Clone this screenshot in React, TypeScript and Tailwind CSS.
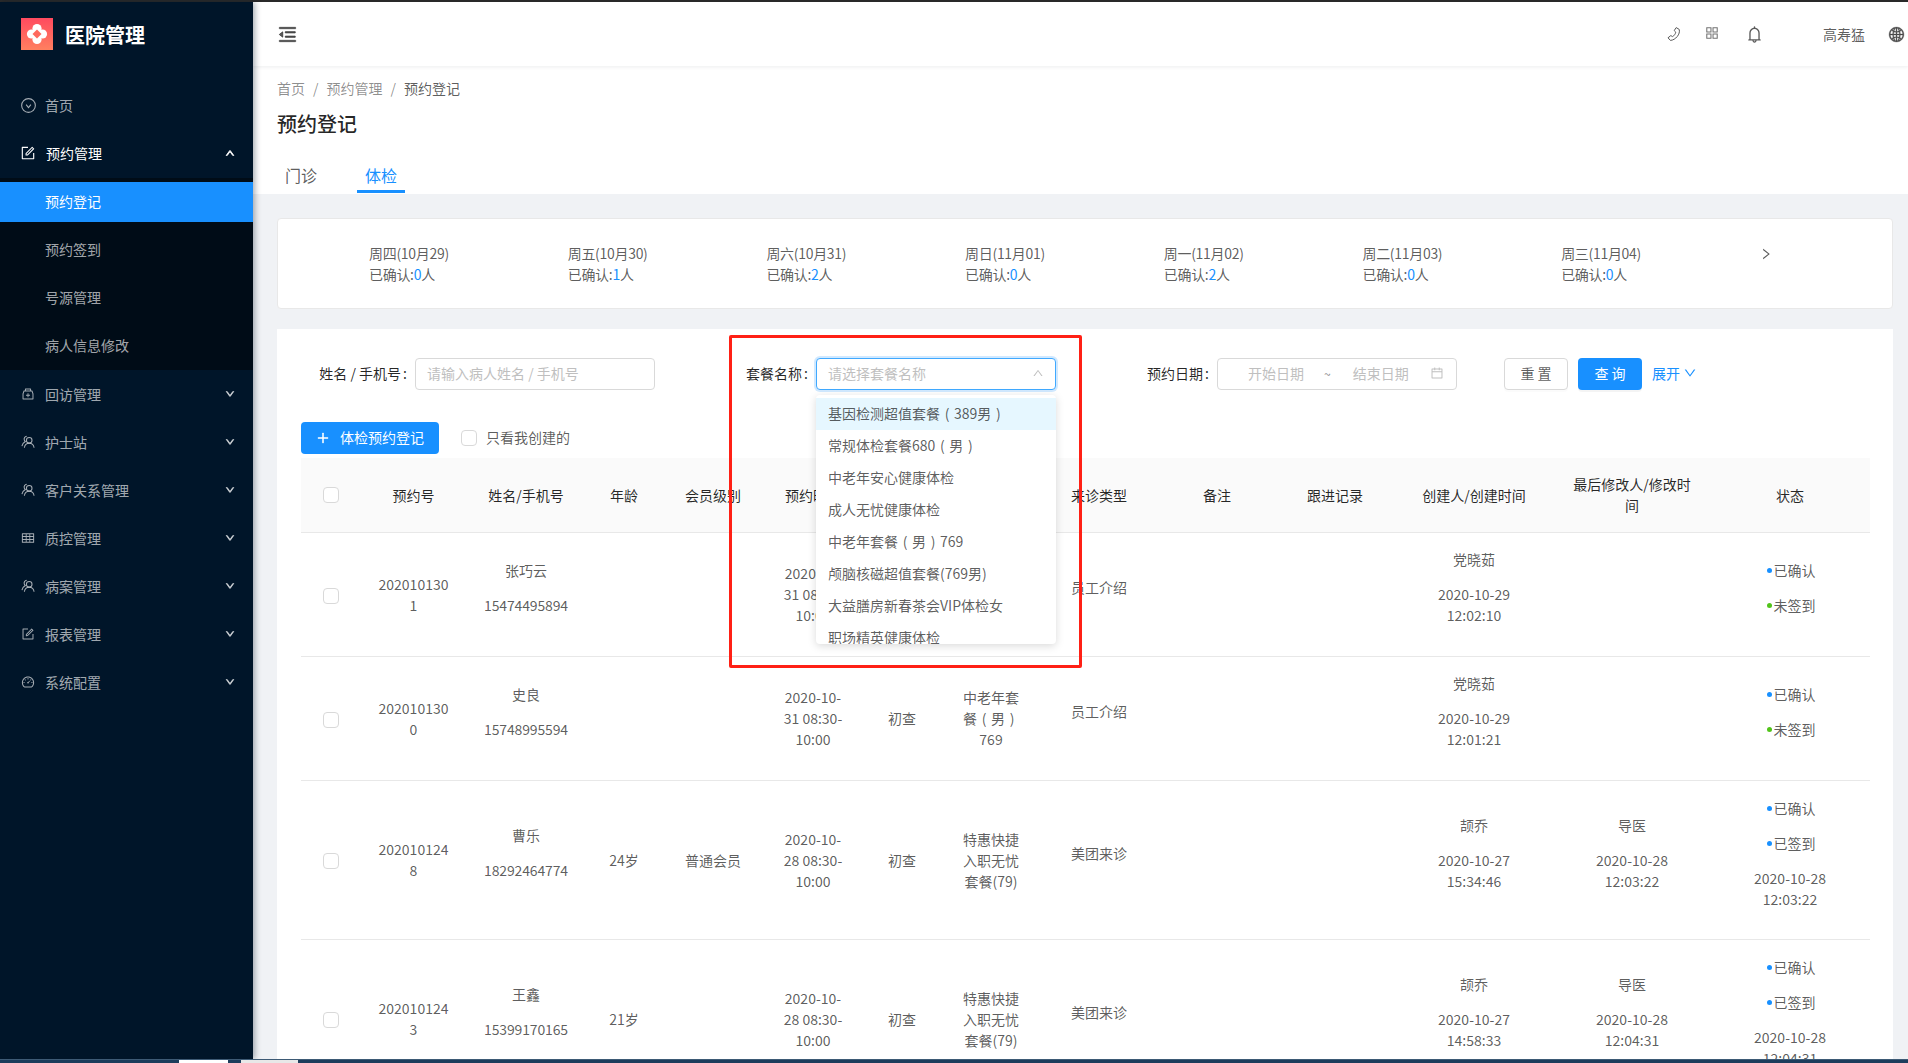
import type { ReactNode } from "react";
import {
  AiOutlineAppstore,
  AiOutlineBell,
  AiOutlineCalendar,
  AiOutlineDashboard,
  AiOutlineDown,
  AiOutlineForm,
  AiOutlineGlobal,
  AiOutlineMedicineBox,
  AiOutlineMenuFold,
  AiOutlinePlus,
  AiOutlineRight,
  AiOutlineTable,
  AiOutlineUp,
} from "react-icons/ai";

const HomeIcon = () => (
  <svg width="15" height="15" viewBox="0 0 14 14" fill="none" stroke="currentColor" strokeWidth="1">
    <circle cx="7" cy="7" r="6.4" />
    <path d="M4.8 6.2 7 9l2.2-2.8" />
  </svg>
);

const PeopleIcon = () => (
  <svg width="16" height="16" viewBox="0 0 15 15" fill="none" stroke="currentColor" strokeWidth="1.1">
    <circle cx="8.8" cy="5.6" r="3" />
    <path d="M3.6 13.600c.4-3 2.400-4.800 5.200-4.800s4.800 1.800 5.200 4.800" />
    <path d="M6.200 1.400a3 3 0 0 0-2.600 4.200c.2.600.6 1 1.100 1.400C2.800 8 1.400 9.600 1 12" />
  </svg>
);

const PhoneIcon = () => (
  <svg width="16" height="16" viewBox="0 0 16 16" fill="none" stroke="#595959" strokeWidth="1">
    <path d="M10.200 1.600 13.200 3.400C14.600 8 9.500 14.200 4.400 14.400L2 11.800 4.800 9.600 6.600 10.600C8.200 9.600 9.400 8 9.800 6.200L8.200 4.600Z" />
  </svg>
);

const Logo = () => (
  <svg width="32" height="32" viewBox="0 0 32 32">
    <defs>
      <linearGradient id="logoBg" x1="0" y1="0" x2="0" y2="1">
        <stop offset="0" stopColor="#ff4a5f" />
        <stop offset="1" stopColor="#ff8060" />
      </linearGradient>
    </defs>
    <rect width="32" height="32" fill="url(#logoBg)" />
    <g fill="#fff">
      <circle cx="16" cy="10.500" r="4.600" />
      <circle cx="16" cy="21.500" r="4.600" />
      <circle cx="10.500" cy="16" r="4.600" />
      <circle cx="21.500" cy="16" r="4.600" />
    </g>
    <path d="M16 11.500 20.500 16 16 20.500 11.500 16Z" fill="#ff6a5e" />
  </svg>
);

// the reference centres its brackets inside a full-width box
const Brackets = ({ text }: { text: string }) => (
  <>
    {text.split(/([（）])/).map((part, i) =>
      part === "（" || part === "）" ? (
        <span key={i} className="inline-block w-[14px] text-center">
          {part === "（" ? "(" : ")"}
        </span>
      ) : (
        part
      ),
    )}
  </>
);

const menuItems = [
  { label: "回访管理", icon: <AiOutlineMedicineBox size={16} /> },
  { label: "护士站", icon: <PeopleIcon /> },
  { label: "客户关系管理", icon: <PeopleIcon /> },
  { label: "质控管理", icon: <AiOutlineTable size={16} /> },
  { label: "病案管理", icon: <PeopleIcon /> },
  { label: "报表管理", icon: <AiOutlineForm size={16} /> },
  { label: "系统配置", icon: <AiOutlineDashboard size={16} /> },
];

const subItems = ["预约登记", "预约签到", "号源管理", "病人信息修改"];

const days = [
  { day: "周四(10月29)", count: 0 },
  { day: "周五(10月30)", count: 1 },
  { day: "周六(10月31)", count: 2 },
  { day: "周日(11月01)", count: 0 },
  { day: "周一(11月02)", count: 2 },
  { day: "周二(11月03)", count: 0 },
  { day: "周三(11月04)", count: 0 },
];

const packages = [
  "基因检测超值套餐（389男）",
  "常规体检套餐680（男）",
  "中老年安心健康体检",
  "成人无忧健康体检",
  "中老年套餐（男）769",
  "颅脑核磁超值套餐(769男)",
  "大益膳房新春茶会VIP体检女",
  "职场精英健康体检",
];

const columns = [
  { title: ["预约号"], width: "w-[105px]" },
  { title: ["姓名/手机号"], width: "w-[120px]" },
  { title: ["年龄"], width: "w-[76px]" },
  { title: ["会员级别"], width: "w-[102px]" },
  { title: ["预约时间"], width: "w-[98px]" },
  { title: [""], width: "w-[80px]" },
  { title: [""], width: "w-[98px]" },
  { title: ["来诊类型"], width: "w-[118px]" },
  { title: ["备注"], width: "w-[118px]" },
  { title: ["跟进记录"], width: "w-[118px]" },
  { title: ["创建人/创建时间"], width: "w-[160px]" },
  { title: ["最后修改人/修改时", "间"], width: "w-[156px]" },
  { title: ["状态"], width: "w-[160px]" },
];

const rows = [
  {
    no: ["202010130", "1"],
    name: "张巧云",
    phone: "15474495894",
    age: "",
    level: "",
    time: ["2020-10-", "31 08:30-", "10:00"],
    kind: "",
    pack: [] as string[],
    source: "员工介绍",
    creator: "党晓茹",
    created: ["2020-10-29", "12:02:10"],
    editor: "",
    edited: [] as string[],
    sign: { text: "未签到", dot: "bg-[#52c41a]" },
    signed: [] as string[],
  },
  {
    no: ["202010130", "0"],
    name: "史良",
    phone: "15748995594",
    age: "",
    level: "",
    time: ["2020-10-", "31 08:30-", "10:00"],
    kind: "初查",
    pack: ["中老年套", "餐（男）", "769"],
    source: "员工介绍",
    creator: "党晓茹",
    created: ["2020-10-29", "12:01:21"],
    editor: "",
    edited: [],
    sign: { text: "未签到", dot: "bg-[#52c41a]" },
    signed: [],
  },
  {
    no: ["202010124", "8"],
    name: "曹乐",
    phone: "18292464774",
    age: "24岁",
    level: "普通会员",
    time: ["2020-10-", "28 08:30-", "10:00"],
    kind: "初查",
    pack: ["特惠快捷", "入职无忧", "套餐(79)"],
    source: "美团来诊",
    creator: "颉乔",
    created: ["2020-10-27", "15:34:46"],
    editor: "导医",
    edited: ["2020-10-28", "12:03:22"],
    sign: { text: "已签到", dot: "bg-[#1890ff]" },
    signed: ["2020-10-28", "12:03:22"],
  },
  {
    no: ["202010124", "3"],
    name: "王鑫",
    phone: "15399170165",
    age: "21岁",
    level: "",
    time: ["2020-10-", "28 08:30-", "10:00"],
    kind: "初查",
    pack: ["特惠快捷", "入职无忧", "套餐(79)"],
    source: "美团来诊",
    creator: "颉乔",
    created: ["2020-10-27", "14:58:33"],
    editor: "导医",
    edited: ["2020-10-28", "12:04:31"],
    sign: { text: "已签到", dot: "bg-[#1890ff]" },
    signed: ["2020-10-28", "12:04:31"],
  },
];

const Lines = ({ lines }: { lines: string[] }) => (
  <>
    {lines.map((line, i) => (
      <div key={i}>
        <Brackets text={line} />
      </div>
    ))}
  </>
);

const Checkbox = () => (
  <span className="block mx-auto w-4 h-4 bg-white border border-[#d9d9d9] rounded-sm" />
);

const Status = ({ text, dot }: { text: string; dot: string }) => (
  <div className="mb-[14px] pl-[2px] flex items-center justify-center gap-[2px]">
    <span className={`w-[5px] h-[5px] rounded-full ${dot}`} />
    <span>{text}</span>
  </div>
);

const FieldLabel = ({ width, children }: { width: string; children: ReactNode }) => (
  <label className={`${width} text-right pr-2 pb-[2px] whitespace-nowrap`}>
    {children}
    <span className="ml-[2px]">:</span>
  </label>
);

const Sidebar = () => (
  <aside className="w-[253px] shrink-0 bg-[#001529] text-[rgba(255,255,255,0.65)] shadow-[2px_0_6px_rgba(0,21,41,0.35)] z-10">
    <div className="h-16 flex items-center pl-[21px] gap-3">
      <Logo />
      <span className="text-[20px] font-semibold text-white">医院管理</span>
    </div>
    <nav className="mt-5">
      <div className="h-10 mb-2 pb-[2px] flex items-center pl-[21px] gap-[9px]">
        <HomeIcon />
        <span>首页</span>
      </div>
      <div className="h-10 mb-1 pb-[2px] flex items-center pl-[21px] pr-[18px] gap-[9px] text-white">
        <AiOutlineForm size={16} className="-ml-px" />
        <span className="flex-1 ml-px">预约管理</span>
        <AiOutlineUp size={10} strokeWidth={100} />
      </div>
      <div className="bg-[#000c17] py-1 flex flex-col gap-2">
        {subItems.map((item, i) => (
          <div
            key={item}
            className={`h-10 pb-[2px] flex items-center pl-[45px] ${i === 0 ? "bg-[#1890ff] text-white" : ""}`}
          >
            {item}
          </div>
        ))}
      </div>
      <div className="mt-1 flex flex-col gap-2">
        {menuItems.map((item) => (
          <div key={item.label} className="h-10 flex items-center pl-[21px] pr-[18px] gap-[10px]">
            <span className="w-[14px] flex justify-center">{item.icon}</span>
            <span className="flex-1">{item.label}</span>
            <AiOutlineDown size={10} strokeWidth={100} />
          </div>
        ))}
      </div>
    </nav>
  </aside>
);

const TopBar = () => (
  <header className="h-16 shrink-0 bg-white flex items-center justify-between pl-6 pr-[3px] shadow-[0_1px_4px_rgba(0,21,41,0.08)] relative text-[rgba(0,0,0,0.65)]">
    <AiOutlineMenuFold size={21} strokeWidth={30} />
    <div className="flex items-center">
      <PhoneIcon />
      <AiOutlineAppstore size={16} className="ml-[22px] -mt-[2px] text-[#737373]" />
      <AiOutlineBell size={19} className="ml-[25px]" />
      <span className="ml-[59px] w-[42px] whitespace-nowrap">高寿猛</span>
      <AiOutlineGlobal size={17} strokeWidth={20} className="ml-[23px]" />
    </div>
  </header>
);

const PageHead = () => (
  <div className="shrink-0 bg-white h-32 pl-6 pt-[11px]">
    <div className="h-[22px] leading-[22px] flex gap-2 text-[rgba(0,0,0,0.45)]">
      <span>首页</span>
      <span>/</span>
      <span>预约管理</span>
      <span>/</span>
      <span className="text-[rgba(0,0,0,0.65)]">预约登记</span>
    </div>
    <h1 className="mt-[11px] h-7 leading-7 text-[20px] font-medium text-[rgba(0,0,0,0.85)]">预约登记</h1>
    <div className="h-14 flex items-end gap-8 pb-px text-[16px] leading-6">
      <div className="w-12 text-center pb-[3px] border-b-[3px] border-transparent text-[rgba(0,0,0,0.65)]">门诊</div>
      <div className="w-12 text-center pb-[3px] border-b-[3px] border-[#1890ff] text-[#1890ff]">体检</div>
    </div>
  </div>
);

const DayStrip = () => (
  <div className="h-[91px] shrink-0 bg-white border border-[#e8e8e8] rounded-sm flex items-center pl-[91px] text-[rgba(0,0,0,0.65)] tracking-[-0.3px]">
    {days.map((d) => (
      <div key={d.day} className="w-[198.7px] shrink-0">
        <div>{d.day}</div>
        <div>
          已确认:<span className="text-[#1890ff]">{d.count}</span>人
        </div>
      </div>
    ))}
    <AiOutlineRight size={14} className="-ml-[1px] -mt-[19px]" />
  </div>
);

const FilterRow = () => (
  <div className="flex items-center pl-6 h-8 text-[rgba(0,0,0,0.85)]">
    <FieldLabel width="w-[114px]">姓名 / 手机号</FieldLabel>
    <div className="w-[240px] h-8 pb-[2px] px-[11px] flex items-center bg-white border border-[#d9d9d9] rounded text-[#bfbfbf]">
      请输入病人姓名 / 手机号
    </div>
    <FieldLabel width="w-[161px]">套餐名称</FieldLabel>
    <div className="relative w-[240px] h-8">
      <div className="h-8 pb-[2px] px-[11px] flex items-center justify-between bg-white border border-[#40a9ff] rounded shadow-[0_0_0_2px_rgba(24,144,255,0.2)] text-[#bfbfbf]">
        <span>请选择套餐名称</span>
        <AiOutlineUp size={12} />
      </div>
      <div className="absolute left-0 top-[37px] w-[240px] h-[249px] pt-[3px] overflow-hidden bg-white rounded shadow-[0_2px_8px_rgba(0,0,0,0.15)] z-20 text-[rgba(0,0,0,0.65)]">
        {packages.map((p, i) => (
          <div key={p} className={`h-8 pb-px flex items-center px-3 whitespace-nowrap ${i === 0 ? "bg-[#e6f7ff]" : ""}`}>
            <span>
              <Brackets text={p} />
            </span>
          </div>
        ))}
      </div>
    </div>
    <FieldLabel width="w-[161px]">预约日期</FieldLabel>
    <div className="w-[240px] h-8 pb-[2px] pl-[30px] pr-3 flex items-center bg-white border border-[#d9d9d9] rounded text-[#bfbfbf]">
      <span>开始日期</span>
      <span className="ml-5 text-[12px] text-[#8c8c8c]">~</span>
      <span className="ml-[22px]">结束日期</span>
      <AiOutlineCalendar size={14} className="ml-auto" />
    </div>
    <button className="ml-[47px] w-[64px] h-8 pb-[2px] bg-white border border-[#d9d9d9] rounded text-[rgba(0,0,0,0.65)] shadow-[0_2px_0_rgba(0,0,0,0.015)]">
      重 置
    </button>
    <button className="ml-[10px] w-[64px] h-8 pb-[2px] bg-[#1890ff] rounded text-white shadow-[0_2px_0_rgba(0,0,0,0.045)]">
      查 询
    </button>
    <span className="ml-[10px] pb-[2px] flex items-center gap-[3px] text-[#1890ff]">
      展开
      <AiOutlineDown size={14} />
    </span>
  </div>
);

const AppointmentTable = () => (
  <table className="mt-1 w-[1569px] table-fixed border-separate border-spacing-0 text-[rgba(0,0,0,0.65)]">
    <colgroup>
      <col className="w-[60px]" />
      {columns.map((c, i) => (
        <col key={i} className={c.width} />
      ))}
    </colgroup>
    <thead>
      <tr className="bg-[#fafafa] text-[rgba(0,0,0,0.85)]">
        <th className="py-4 border-b border-[#e8e8e8] font-normal">
          <Checkbox />
        </th>
        {columns.map((c, i) => (
          <th key={i} className="py-4 px-4 border-b border-[#e8e8e8] font-normal">
            <Lines lines={c.title} />
          </th>
        ))}
      </tr>
    </thead>
    <tbody>
      {rows.map((r) => (
        <tr key={r.no.join("")} className="text-center">
          <td className="pt-[17px] pb-[15px] border-b border-[#e8e8e8]">
            <Checkbox />
          </td>
          <td className="py-4 border-b border-[#e8e8e8]">
            <Lines lines={r.no} />
          </td>
          <td className="py-4 border-b border-[#e8e8e8]">
            <div className="mb-[14px]">{r.name}</div>
            <div className="mb-[14px] tracking-[-0.15px]">{r.phone}</div>
          </td>
          <td className="py-4 border-b border-[#e8e8e8]">{r.age}</td>
          <td className="py-4 border-b border-[#e8e8e8]">{r.level}</td>
          <td className="py-4 border-b border-[#e8e8e8]">
            <Lines lines={r.time} />
          </td>
          <td className="py-4 border-b border-[#e8e8e8]">{r.kind}</td>
          <td className="py-4 border-b border-[#e8e8e8]">
            <Lines lines={r.pack} />
          </td>
          <td className="py-4 border-b border-[#e8e8e8]">
            <div className="mb-[14px]">{r.source}</div>
          </td>
          <td className="py-4 border-b border-[#e8e8e8]" />
          <td className="py-4 border-b border-[#e8e8e8]" />
          <td className="py-4 border-b border-[#e8e8e8]">
            <div className="mb-[14px]">{r.creator}</div>
            <Lines lines={r.created} />
            <div className="h-[14px]" />
          </td>
          <td className="py-4 border-b border-[#e8e8e8]">
            {r.editor && <div className="mb-[14px]">{r.editor}</div>}
            <Lines lines={r.edited} />
            {r.editor && <div className="h-[14px]" />}
          </td>
          <td className={`border-b border-[#e8e8e8] ${r.signed.length > 0 ? "pt-[17px] pb-[15px]" : "py-4"}`}>
            <Status text="已确认" dot="bg-[#1890ff]" />
            <Status text={r.sign.text} dot={r.sign.dot} />
            <Lines lines={r.signed} />
            {r.signed.length > 0 && <div className="h-[14px]" />}
          </td>
        </tr>
      ))}
    </tbody>
  </table>
);

const App = () => {
  return (
    <div className="relative h-screen w-full overflow-hidden flex flex-col bg-[#f0f2f5] text-[14px] leading-[21px] font-['Noto_Sans_CJK_SC',sans-serif]">
      <div className="h-[2px] shrink-0 bg-[#2a2a2a]" />
      <div className="flex-1 min-h-0 flex">
        <Sidebar />
        <main className="flex-1 min-w-0 flex flex-col">
          <TopBar />
          <PageHead />
          <div className="flex-1 min-h-0 pt-6 pl-6 pr-[15px] flex flex-col gap-5">
            <DayStrip />
            <section className="flex-1 min-h-0 overflow-hidden bg-white pt-[29px]">
              <FilterRow />
              <div className="mt-8 ml-6 h-8 flex items-center">
                <button className="w-[138px] h-8 pb-px flex items-center justify-center gap-[10px] bg-[#1890ff] rounded text-white">
                  <AiOutlinePlus size={14} strokeWidth={40} />
                  体检预约登记
                </button>
                <span className="ml-[22px]">
                  <Checkbox />
                </span>
                <span className="ml-[9px] pb-px text-[rgba(0,0,0,0.65)]">只看我创建的</span>
              </div>
              <div className="ml-6">
                <AppointmentTable />
              </div>
            </section>
          </div>
        </main>
      </div>
      <div className="h-1 shrink-0 flex bg-[#1d3d5c] border-t border-[#3d5a75] z-10">
        <div className="w-[179px]" />
        <div className="w-[49px] bg-white" />
        <div className="w-[13px]" />
        <div className="w-[57px] bg-[#e8e8e8]" />
      </div>
      {/* red annotation drawn over the screenshot */}
      <div className="absolute left-[729px] top-[335px] w-[353px] h-[333px] border-[3px] border-[#ff2015] rounded-[2px] z-30 pointer-events-none" />
    </div>
  );
};

export default App;
